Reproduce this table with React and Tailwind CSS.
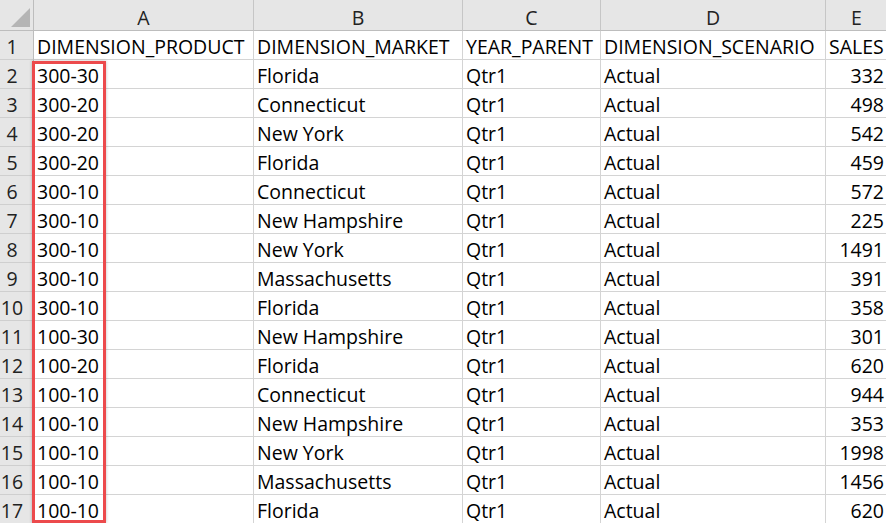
const cols = ['A', 'B', 'C', 'D', 'E'];

const rows = [
  ['DIMENSION_PRODUCT', 'DIMENSION_MARKET', 'YEAR_PARENT', 'DIMENSION_SCENARIO', 'SALES'],
  ['300-30', 'Florida', 'Qtr1', 'Actual', '332'],
  ['300-20', 'Connecticut', 'Qtr1', 'Actual', '498'],
  ['300-20', 'New York', 'Qtr1', 'Actual', '542'],
  ['300-20', 'Florida', 'Qtr1', 'Actual', '459'],
  ['300-10', 'Connecticut', 'Qtr1', 'Actual', '572'],
  ['300-10', 'New Hampshire', 'Qtr1', 'Actual', '225'],
  ['300-10', 'New York', 'Qtr1', 'Actual', '1491'],
  ['300-10', 'Massachusetts', 'Qtr1', 'Actual', '391'],
  ['300-10', 'Florida', 'Qtr1', 'Actual', '358'],
  ['100-30', 'New Hampshire', 'Qtr1', 'Actual', '301'],
  ['100-20', 'Florida', 'Qtr1', 'Actual', '620'],
  ['100-10', 'Connecticut', 'Qtr1', 'Actual', '944'],
  ['100-10', 'New Hampshire', 'Qtr1', 'Actual', '353'],
  ['100-10', 'New York', 'Qtr1', 'Actual', '1998'],
  ['100-10', 'Massachusetts', 'Qtr1', 'Actual', '1456'],
  ['100-10', 'Florida', 'Qtr1', 'Actual', '620'],
];

export default function App() {
  return (
    <div className="relative w-[886px] h-[523px] overflow-hidden bg-white text-black font-['Open_Sans',sans-serif] text-[19.5px]">
      <div className="grid w-[888px] grid-cols-[34px_220px_209px_138px_225px_62px] grid-rows-[31px] auto-rows-[29px]">
        {/* corner */}
        <div className="relative bg-[#e6e6e6] border-r border-b border-[#bdbdbd]">
          <div className="absolute right-[3px] bottom-[3px] w-0 h-0 border-l-[19px] border-l-transparent border-b-[19px] border-b-[#b5b5b5]" />
        </div>
        {cols.map((c) => (
          <div
            key={c}
            className="flex items-end justify-center bg-[#e6e6e6] border-r border-b border-r-[#c6c6c6] border-b-[#bdbdbd] text-[#222] leading-none h-[31px]"
          >
            <span className="pb-[3px]">{c}</span>
          </div>
        ))}
        {rows.map((r, i) => (
          <Row key={i} n={i + 1} cells={r} />
        ))}
      </div>

      {/* highlight around product column */}
      <div className="absolute left-[32px] top-[61px] w-[74px] h-[462px] border-[3px] border-[#ec4a4c] shadow-[0_0_3px_rgba(0,0,0,0.25)]" />
    </div>
  );
}

function Row({ n, cells }) {
  return (
    <>
      <div className="flex items-end justify-center pr-[9px] bg-[#e6e6e6] border-r border-b border-r-[#bdbdbd] border-b-[#cfcfcf] text-[#222] leading-none">
        <span className="pb-[3px]">{n}</span>
      </div>
      {cells.map((v, j) => (
        <div
          key={j}
          className={
            'flex items-end border-r border-b border-[#d4d4d4] leading-none whitespace-nowrap overflow-hidden ' +
            (j === 4 && n > 1 ? 'justify-end pr-[3px]' : 'pl-[3px]')
          }
        >
          <span className="pb-[3px]">{v}</span>
        </div>
      ))}
    </>
  );
}
